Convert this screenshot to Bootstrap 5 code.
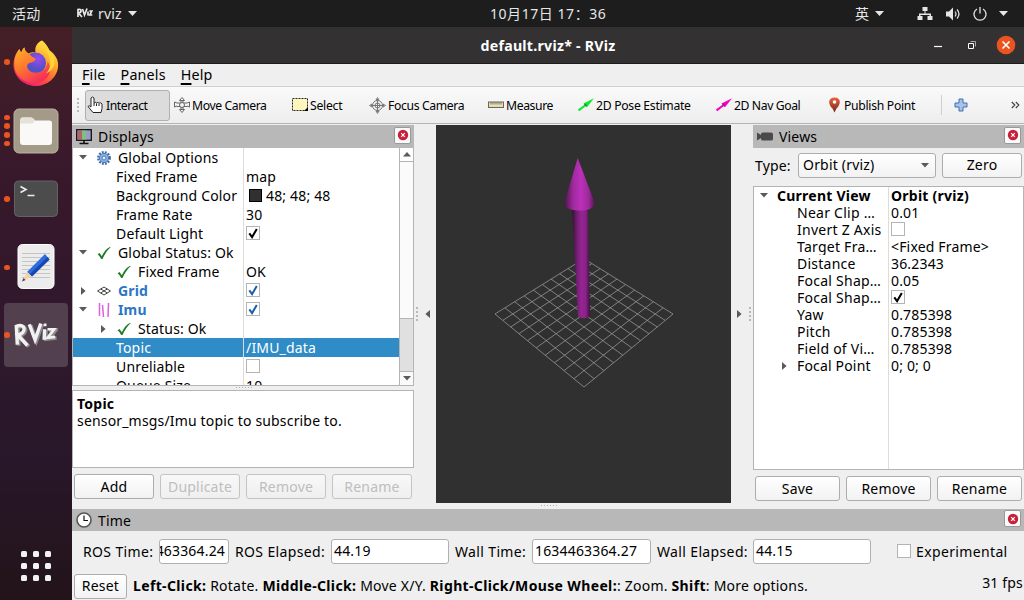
<!DOCTYPE html>
<html lang="zh-CN">
<head>
<meta charset="utf-8">
<meta name="viewport" content="width=device-width, initial-scale=1">
<title>default.rviz* - RViz</title>
<link href="https://cdn.jsdelivr.net/npm/bootstrap@5.3.0/dist/css/bootstrap.min.css" rel="stylesheet">
<style>
body{width:1024px;height:600px;overflow:hidden;background:#efefef;color:#000;font:14px/19px "Noto Sans","Noto Sans CJK SC",sans-serif;letter-spacing:.17px;white-space:nowrap}
b{letter-spacing:.24px}
svg{display:block;flex:none}
.topbar{height:27px;background:#1d1d1d;color:#e6e6e6;display:grid;grid-template-columns:12px 64px 404px 1fr;align-items:center}
.clock{padding-left:10px;letter-spacing:.55px}
.tray{width:169px;display:grid;grid-template-columns:19px 43px 28px 28px 23px 1fr;align-items:center}
.dock{width:72px;height:573px;background:linear-gradient(#451f26,#38182b 25%,#2f182c 55%,#28172a 75%,#221419);}
.dock-item{height:68.400px;width:72px;padding-top:2px}
.dots{width:13px;padding-left:4px;gap:3.7px}
.dots i{width:5.6px;height:5.6px;border-radius:50%;background:#e95420}
.tile{width:64px;height:64px;background:#53404f;border-radius:4px;margin-left:4px}
.titlebar{height:37px;background:#333132;border-bottom:1px solid #1c1b1b;color:#fff;font-weight:700;font-size:14.2px;letter-spacing:.25px}
.win-buttons{width:92px;margin-left:-92px}
.menus{height:22px;gap:15px;padding:0 10px 1px;font-size:14.3px;letter-spacing:.17px}
.menus u{text-underline-offset:3px;text-decoration-thickness:1.5px}
.tools{height:38px;border-top:1px solid #cfcfcf;border-bottom:1px solid #b4b4b4;background:linear-gradient(#fafafa,#ededed);display:grid;grid-template-columns:13px 85px 118px 77px 119px 90px 138px 111px 115px 30px 1fr;align-items:center;font-size:12.2px;letter-spacing:-.4px}
.tool{gap:2px;padding-left:4px}
.tool.active{height:31px;border:1px solid #b0b0b0;border-radius:3px;background:#dcdcdc;padding-left:1px}
.grip-v{width:4px;height:16px;background-image:radial-gradient(circle,#b9b9b9 .8px,transparent 1px);background-size:4px 4px}
.grip-h{width:17px;height:3px;background-image:radial-gradient(circle,#b0b0b0 .7px,transparent 1px);background-size:3px 3px}
.main-area{height:379px;margin-top:1px;display:grid;grid-template-columns:342px 22px 295px 22px 271px}
.head{height:23px;background:#b8b8b8;padding-left:4px;gap:6px}
.x-btn{width:17px;height:17px;border:1px solid #999;border-radius:2px;background:#fafafa;margin:0 3px 3px auto}
.tree{background:#fff;border:1px solid #b4b4b4}
.disp{height:238px;border-top:0;overflow:hidden}
.disp .entry{height:19px;width:326px;display:grid;grid-template-columns:171px 1fr;align-items:stretch}
.entry>div{display:flex;align-items:center}
.entry>div:first-child{border-right:1px solid #dcdcdc;overflow:hidden}
.disp .entry>div:last-child{padding-left:2px}
.chev{width:20px;flex:none;display:flex;justify-content:center}
.ico{width:25px;flex:none;display:flex;justify-content:center;padding-right:4px}
.l2{padding-left:43px!important}
.blue{color:#2a76c6;font-weight:700}
.sel{background:#308cc6;color:#fff}
.box{width:14px;height:14px;border:1px solid #b4b4b4;background:#fff}
.entry .box{margin-bottom:1px}
.scrollb{width:14px;border-left:1px solid #b4b4b4;background:#e0e0e0}
.sb-up{height:14px;border-bottom:1px solid #b4b4b4;background:#fff}
.sb-thumb{height:157px;background:#fbfbfb;border-bottom:1px solid #b4b4b4}
.sb-down{height:14px;border-top:1px solid #b4b4b4;background:#fafafa;margin-top:auto}
.help{height:78px;background:#fff;border:1px solid #b4b4b4;padding:4px 4px;line-height:17px}
.b{height:25px;padding:0;border:1px solid #adadad;border-radius:3px;background:linear-gradient(#fff,#f2f2f2);color:#000;font-size:14px;line-height:22px;letter-spacing:.2px}
.b.disabled,.b:disabled{color:#bebebe;border-color:#c4c4c4;background:linear-gradient(#f8f8f8,#efefef);opacity:1}
.b4{gap:6px;padding:6px 2px 0}.b4 .b{width:80px}
.b3{gap:6px;padding:6px 2px 0}.b3 .b{width:85px}
.type-row{height:38px;padding:0 2px 4px}
.views .entry{height:17px;line-height:17px;display:grid;grid-template-columns:135px 1fr}
.views .entry>div:first-child{border:0}
.views .entry>div:last-child{padding-left:2px}
.view-tree{height:284px;background:linear-gradient(#dcdcdc,#dcdcdc) 134px 0/1px 100% no-repeat #fff}
.l1v{padding-left:43px;letter-spacing:.25px}
.field{height:25px;border:1px solid #b0b0b0;border-radius:3px;background:#fff;padding:0 3px 1px 2px;line-height:22px;overflow:hidden}
.times{height:40px;display:grid;grid-template-columns:76px 70px 6px 96px 118px 6px 77px 119px 6px 96px 118px 26px 1fr;align-items:center;padding-left:11px}
.times>span,.times .cap{letter-spacing:.36px}
.hint{letter-spacing:.22px}
.hint b{letter-spacing:.36px}
.apps{padding:184px 0 0 21px}
</style>
</head>
<body>
<svg width="0" height="0" class="position-absolute">
<defs>
<symbol id="dn" viewBox="0 0 8 5"><path d="M0 0h8L4 4.6z" fill="#5a5a5a"/></symbol>
<symbol id="rt" viewBox="0 0 5 8"><path d="M0 0v8L4.6 4z" fill="#5a5a5a"/></symbol>
<symbol id="ok" viewBox="0 0 14 14"><path d="M.6 8.2L2.6 7l2.2 3.2C7.200 5.500 9.500 2.500 13.300.8L13.600 1.200C10 4.500 7.500 8.500 5.500 13H4.200C3.200 11 2 9.400.6 8.200z" fill="#1e7b24"/></symbol>
<symbol id="tick" viewBox="0 0 12 12"><path d="M2.300 6.300l2.800 3.800L9.800 2" fill="none" stroke="currentColor" stroke-width="2"/></symbol>
<symbol id="x" viewBox="0 0 12 12"><circle cx="6" cy="6" r="5.200" fill="#c8203a"/><path d="M4.200 4.200l3.600 3.600M7.800 4.200l-3.600 3.600" stroke="#fff" stroke-width="1.200"/></symbol>
<symbol id="pose" viewBox="0 0 16 14"><path d="M.5 12.500L7 7.500" stroke="currentColor" stroke-width="2.200"/><path d="M5.500 5.500L16 .2 9 9.200z" fill="currentColor"/><path d="M6.500 6l2 2.300" stroke="#333" stroke-opacity=".6" stroke-width="1.500"/></symbol>
<linearGradient id="gm" x2="1"><stop stop-color="#4c164a"/><stop offset=".3" stop-color="#a02a9f"/><stop offset=".55" stop-color="#bb30b9"/><stop offset=".8" stop-color="#9d299b"/><stop offset="1" stop-color="#561654"/></linearGradient>
<linearGradient id="gs" x2="1"><stop stop-color="#2b112c"/><stop offset=".22" stop-color="#6a1b69"/><stop offset=".5" stop-color="#942592"/><stop offset=".75" stop-color="#8b2289"/><stop offset="1" stop-color="#3a1239"/></linearGradient>
<linearGradient id="ff" x1=".8" y1="0" x2=".2" y2="1"><stop stop-color="#fff44f"/><stop offset=".35" stop-color="#ffab2a"/><stop offset=".65" stop-color="#ff5a35"/><stop offset="1" stop-color="#e5127b"/></linearGradient>
<linearGradient id="ffo" x1="0" y1="0" x2=".6" y2="1"><stop stop-color="#ffb32c"/><stop offset=".5" stop-color="#ff7a2c"/><stop offset="1" stop-color="#f5305a"/></linearGradient>
<radialGradient id="fp" cx=".6" cy=".3"><stop stop-color="#9a4bf0"/><stop offset="1" stop-color="#5650c8"/></radialGradient>
<linearGradient id="pin" x2="0" y2="1"><stop stop-color="#f0603c"/><stop offset="1" stop-color="#6f2a18"/></linearGradient>
</defs>
</svg>

<header class="topbar">
  <span></span><span>活动</span>
  <div class="d-flex align-items-center">
    <svg width="17" height="14" viewBox="0 0 17 14" fill="none" stroke="#e8e8e8" stroke-width="1.700"><path d="M2 10V2.500c4-1 4 3 .5 3.500L6 10M6.500 2l2 6L11 1.500M12 4.500v4M13.300 4h2.500l-2 4h2.500"/></svg>
    <span style="margin-left:5px">rviz</span>
    <svg style="margin-left:5px" width="11" height="7"><path d="M1 1h9L5.500 6z" fill="#e6e6e6"/></svg>
  </div>
  <div class="d-flex align-items-center justify-content-between">
    <span class="clock">10月17日 17：36</span>
    <div class="tray">
      <span>英</span>
      <svg width="11" height="7"><path d="M1 1h9L5.500 6z" fill="#e6e6e6"/></svg>
      <svg width="16" height="14" viewBox="0 0 16 14" fill="#e6e6e6"><path d="M5.500 0h5v4h-2v2.500H14V9h1.500v4h-5V9h2V8h-9v1h2v4H.5V9H2V6.500h5.500V4h-2z"/></svg>
      <svg width="16" height="14" viewBox="0 0 16 14"><path d="M1 4.500h3L8 .5v13L4 9.500H1z" fill="#e6e6e6"/><path d="M10 4.500q2 2.500 0 5M12 2.500q4 4.500 0 9" fill="none" stroke="#e6e6e6" stroke-width="1.200"/></svg>
      <svg width="14" height="14" viewBox="0 0 14 14" fill="none" stroke="#e6e6e6" stroke-width="1.300"><path d="M4 2a6 6 0 1 0 6 0M7 0v6.500"/></svg>
      <svg style="margin-left:2px" width="11" height="7"><path d="M1 1h9L5.500 6z" fill="#e6e6e6"/></svg>
    </div>
  </div>
</header>

<div class="d-flex">
<nav class="dock">
  <div class="dock-item d-flex align-items-center"><div class="dots d-flex flex-column"><i></i></div>
    <svg width="46" height="47" viewBox="0 0 46 47"><path d="M29 1.500C33 5 35 8 36 11c6 4 10 10 9 17-1 11-11 19-22.500 19S1 38 .5 27C.3 19 3 14 6.500 10c.5 2 1 2.500 2 3.500C9 11 10 9.500 11.500 8.500c0 3 2 5 4 6 2.500-1.500 5-1.500 7-1C21.500 8 24 3.500 29 1.500z" fill="url(#ff)"/><circle cx="22.500" cy="24" r="10.500" fill="url(#fp)"/><path d="M6.500 10c.5 2 1 2.500 2 3.500C9 11 10 9.500 11.500 8.500c0 3 2 5 4 6 1 1 4 4 7 5 0 3-4 4-7 5-3 2-1 8 5 9 7 1 14-3 14-11 5 6 3 18-8 21C12 46 2 37 1.500 27 1.300 19 3 14 6.500 10z" fill="url(#ffo)"/><path d="M29 1.500c0 5 3 8 5 12 5 8 4 16-1 21 10-4 11-15 4-22C35 8 33 5 29 1.500z" fill="#ffd437"/></svg></div>
  <div class="dock-item d-flex align-items-center"><div class="dots d-flex flex-column" style="gap:3px"><i></i><i></i><i></i><i></i></div>
    <svg width="46" height="46" viewBox="0 0 46 46"><rect x="1" y="1" width="44" height="44" rx="5" fill="#a39b88" stroke="#b8b29f"/><path d="M7 13.500q0-4 3-4h8q2 0 4 3h14.500q2.500 0 2.500 2.500v19q0 3-3 3H10q-3 0-3-3z" fill="#faf9f7"/><path d="M7 13.500q0-4 3-4h8q2 0 4 3l-2.500 3H7z" fill="#e5e2da"/></svg></div>
  <div class="dock-item d-flex align-items-center"><div class="dots d-flex flex-column"><i></i></div>
    <svg width="46" height="38" viewBox="0 0 46 38"><rect x="1.500" y="1" width="43" height="35.500" rx="4" fill="#4c4c4c" stroke="#636363"/><path d="M7.500 6.500l5.500 3-5.500 3M14.500 15.500h7" fill="none" stroke="#eee" stroke-width="1.600"/></svg></div>
  <div class="dock-item d-flex align-items-center"><div class="dots d-flex flex-column"><i></i></div>
    <svg width="46" height="48" viewBox="0 0 46 48"><rect x="5" y="1.500" width="36" height="44" rx="4.500" fill="#ececec" stroke="#fff"/><path d="M9 10.500h28M9 14.500h28M9 18.500h28M9 22.500h28M9 26.500h28M9 30.500h28M9 34.500h28" stroke="#c4c4c4"/><path d="M14 29l18-18 4.500 5.500L19 33.500z" fill="#2d6be0"/><path d="M16.500 31.500l18-17.500 2 2.500L19 33.500z" fill="#1746ad"/><path d="M14 29l5 4.500L9 38.500z" fill="#f5d3a9"/><path d="M10.500 35l2 2L9 38.500z" fill="#444"/></svg></div>
  <div class="tile d-flex align-items-center" style="margin-top:2.400px"><div class="dots d-flex flex-column" style="padding-left:0;width:9px"><i></i></div>
    <svg width="45" height="30" viewBox="0 0 47 30" fill="none"><g stroke="#8b8b8b" stroke-width="4" transform="translate(1.500 1)"><path d="M4.500 25L3.500 6c10-4 11 7 1.500 9l10 11M17 4l6 16 6-17M33 9l-.5 11M36 9h7l-7 9 8-1"/></g><g stroke="#f1f1f1" stroke-width="3.600"><path d="M4.500 25L3.500 6c10-4 11 7 1.500 9l10 11M17 4l6 16 6-17M33 9l-.5 11"/><path d="M36 9h7l-7 9 8-1M32 4.500h3" stroke-width="2.800"/></g></svg></div>
  <div class="apps">
    <svg width="30" height="30" viewBox="0 0 30 30" fill="#f2f2f2"><g id="ar"><rect width="6" height="6" rx="1.500"/><rect x="12" width="6" height="6" rx="1.500"/><rect x="24" width="6" height="6" rx="1.500"/></g><use href="#ar" y="12"/><use href="#ar" y="24"/></svg></div>
</nav>

<div style="width:952px">
  <div class="titlebar d-flex align-items-center">
      <span class="flex-fill text-center">default.rviz* - RViz</span>
      <svg class="win-buttons" width="92" height="22" viewBox="0 0 92 22" fill="none" stroke="#fff"><path d="M2 12.500h8" stroke-width="1.200"/><path d="M36.500 9.500h5v5h-5z"/><path d="M38.500 7.500h5v5" stroke="#aaa"/><circle cx="74" cy="11" r="9.300" fill="#e95420" stroke="none"/><path d="M70.500 7.500l7 7M77.500 7.500l-7 7" stroke-width="1.600"/></svg>
  </div>
  <div class="menus d-flex align-items-center"><span><u>F</u>ile</span><span><u>P</u>anels</span><span><u>H</u>elp</span></div>
  <div class="tools">
    <div class="grip-v ms-1"></div>
    <div class="tool active d-flex align-items-center"><svg width="17" height="18" viewBox="0 0 17 18"><path d="M4 10V2q1.500-2 3 0v5q1.500-1.500 2.500 0 1.500-1.200 2.500.2 2-1.200 3 .8v4.500L14 16.500H6L1 10.500q1-2 3 .5z" fill="#fff" stroke="#222"/><path d="M7 7v3M9.500 7.500V10M12 8v2" stroke="#222" fill="none"/></svg>Interact</div>
    <div class="tool d-flex align-items-center"><svg width="16" height="16" viewBox="0 0 16 16" fill="none" stroke="#666"><circle cx="8" cy="8" r="2.500"/><path d="M8 .5l2.500 3h-5zM8 15.500l2.500-3h-5zM.5 5v5l2.500-1M15.500 5v5L13 9M3 6h3M10 6h3M3 9.500h3M10 9.500h3M7 4v2M9 4v2M7 10v2.500M9 10v2.500M.5 5L3 6M15.500 5L13 6"/></svg>Move Camera</div>
    <div class="tool d-flex align-items-center" style="letter-spacing:-.25px"><svg width="16" height="14" viewBox="0 0 16 14"><rect x=".5" y=".5" width="15" height="12" fill="#fff6bd" stroke="#222" stroke-dasharray="2 1"/><path d="M12 13h4V9z"/></svg>Select</div>
    <div class="tool d-flex align-items-center" style="letter-spacing:-.36px"><svg width="17" height="17" viewBox="0 0 17 17" fill="none" stroke="#777"><circle cx="8.500" cy="8.500" r="5"/><circle cx="8.500" cy="8.500" r="2.500"/><path d="M8.500 2v13M2 8.500h13M8.500.5L7 3h3zM8.500 16.500L7 14h3zM.5 8.500L3 7v3zM16.500 8.500L14 7v3z"/></svg>Focus Camera</div>
    <div class="tool d-flex align-items-center"><svg width="16" height="8" viewBox="0 0 16 8"><rect x=".5" y="1" width="15" height="5.500" fill="#e8dfae" stroke="#666"/><path d="M3 1v2.500M5 1v2.500M7 1v2.500M9 1v2.500M11 1v2.500M13 1v2.500" stroke="#666" stroke-width=".8"/></svg>Measure</div>
    <div class="tool d-flex align-items-center" style="letter-spacing:-.29px"><svg width="16" height="14" color="#0bea2c"><use href="#pose"/></svg>2D Pose Estimate</div>
    <div class="tool d-flex align-items-center"><svg width="16" height="14" color="#f500c8"><use href="#pose"/></svg>2D Nav Goal</div>
    <div class="tool d-flex align-items-center" style="gap:2px;letter-spacing:-.3px"><svg width="15" height="16" viewBox="0 0 15 16"><path d="M7.500.5c7 0 6.500 7 2 11l-2 4-2-4C1 7.500.5.500 7.500.5z" fill="url(#pin)"/><circle cx="7.500" cy="5" r="1.800" fill="#fff"/></svg>Publish Point</div>
    <div class="d-flex align-items-center"><svg width="32" height="20" viewBox="0 0 32 20"><path d="M3.500 0v20" stroke="#cfcfcf"/><path d="M20.500 4.500h4v4h4v4h-4v4h-4v-4h-4v-4h4z" transform="translate(.5 -.5)" fill="#a9c3e6" stroke="#3f6fb0"/></svg></div>
    <span class="ms-auto" style="padding-right:4px"><svg width="9" height="8" viewBox="0 0 9 8" fill="none" stroke="#444" stroke-width="1.200"><path d="M.8 1l3 3-3 3M4.800 1l3 3-3 3"/></svg></span>
  </div>

  <div class="main-area">
    <section>
      <div class="head d-flex align-items-center"><svg width="16" height="17" viewBox="0 0 16 17"><rect x=".7" y="1.700" width="14.600" height="10.600" fill="#9a9ad0" stroke="#111" stroke-width="1.300"/><path d="M1.500 2.500H6v9H1.500z" fill="#b06464"/><path d="M6 2.500h4.500v9H6z" fill="#7fc07f"/><path d="M8 12v3M3.500 15.500h9" stroke="#111" stroke-width="1.600"/></svg><span>Displays</span><div class="x-btn d-flex align-items-center justify-content-center"><svg width="12" height="12"><use href="#x"/></svg></div></div>
      <div class="tree disp d-flex">
        <div style="width:326px">
          <div class="entry"><div><span class="chev"><svg width="8" height="5"><use href="#dn"/></svg></span><span class="ico"><svg width="14" height="14" viewBox="0 0 14 14"><circle cx="7" cy="7" r="5.700" fill="none" stroke="#3d69a8" stroke-width="2.400" stroke-dasharray="1.800 1.200"/><circle cx="7" cy="7" r="4.600" fill="#8fb3e0" stroke="#4a78b8"/><circle cx="7" cy="7" r="2" fill="#e6eefa" stroke="#4a78b8"/></svg></span><span>Global Options</span></div><div></div></div>
          <div class="entry"><div class="l2">Fixed Frame</div><div>map</div></div>
          <div class="entry"><div class="l2">Background Color</div><div><svg width="20" height="13"><rect x="3.500" y=".5" width="12" height="12" fill="#303030" stroke="#000"/></svg>48; 48; 48</div></div>
          <div class="entry"><div class="l2">Frame Rate</div><div>30</div></div>
          <div class="entry"><div class="l2">Default Light</div><div><span class="box"><svg width="12" height="12"><use href="#tick"/></svg></span></div></div>
          <div class="entry"><div><span class="chev"><svg width="8" height="5"><use href="#dn"/></svg></span><span class="ico"><svg width="14" height="14"><use href="#ok"/></svg></span><span>Global Status: Ok</span></div><div></div></div>
          <div class="entry"><div><span class="chev"></span><span class="chev"></span><span class="ico"><svg width="14" height="14"><use href="#ok"/></svg></span><span>Fixed Frame</span></div><div>OK</div></div>
          <div class="entry"><div><span class="chev"><svg width="5" height="8"><use href="#rt"/></svg></span><span class="ico"><svg width="14" height="10" viewBox="0 0 14 10" fill="none" stroke="#444"><path d="M.5 5L7 1l6.500 4L7 9zM3.700 3l6.600 4M10.300 3L3.700 7"/></svg></span><span class="blue">Grid</span></div><div><span class="box" style="color:#1d5fa8"><svg width="12" height="12"><use href="#tick"/></svg></span></div></div>
          <div class="entry"><div><span class="chev"><svg width="8" height="5"><use href="#dn"/></svg></span><span class="ico"><svg width="14" height="14" viewBox="0 0 14 14" stroke="#dc62dc" stroke-width="1.500"><path d="M2.500 0v13M5.500 2l1 12M11 14l.5-14"/></svg></span><span class="blue">Imu</span></div><div><span class="box" style="color:#1d5fa8"><svg width="12" height="12"><use href="#tick"/></svg></span></div></div>
          <div class="entry"><div><span class="chev"></span><span class="chev"><svg width="5" height="8"><use href="#rt"/></svg></span><span class="ico"><svg width="14" height="14"><use href="#ok"/></svg></span><span>Status: Ok</span></div><div></div></div>
          <div class="entry sel"><div class="l2">Topic</div><div>/IMU_data</div></div>
          <div class="entry"><div class="l2">Unreliable</div><div><span class="box"></span></div></div>
          <div class="entry"><div class="l2">Queue Size</div><div>10</div></div>
        </div>
        <div class="scrollb d-flex flex-column"><div class="sb-up d-flex align-items-center justify-content-center"><svg width="8" height="5" viewBox="0 0 8 5"><path d="M0 4.500h8L4 0z" fill="#5a5a5a"/></svg></div><div class="sb-thumb"></div><div class="sb-down d-flex align-items-center justify-content-center"><svg width="8" height="5"><use href="#dn"/></svg></div></div>
      </div>
      <div class="d-flex justify-content-center" style="height:4px"><div class="grip-h"></div></div>
      <div class="help"><b>Topic</b><br>sensor_msgs/Imu topic to subscribe to.</div>
      <div class="b4 d-flex"><button class="btn b">Add</button><button class="btn b" disabled>Duplicate</button><button class="btn b" disabled>Remove</button><button class="btn b" disabled>Rename</button></div>
    </section>
    <div class="d-flex align-items-center" style="gap:9px;padding:0 0 2px 1px"><div class="grip-v"></div><svg style="margin-left:-3px" width="5" height="8"><path d="M5 0v8L.4 4z" fill="#5a5a5a"/></svg></div>
    <svg id="scene" width="295" height="378" viewBox="0 0 295 378"><rect width="295" height="378" fill="#303030"/><path id="grid" fill="none" stroke="#8f8f8f" stroke-width=".85"/>
      <path d="M136 82h15.800l2.400 109.500q-6 3.500-12.200 0z" fill="url(#gs)"/>
      <path d="M141.700 33l17 45q-1 7.500-15 7.500T128.300 78z" fill="url(#gm)"/></svg>
    <div class="d-flex align-items-center" style="padding:0 0 2px 6px;gap:6px"><svg width="5" height="8"><use href="#rt"/></svg><div class="grip-v"></div></div>
    <section class="views">
      <div class="head d-flex align-items-center"><svg width="16" height="9" viewBox="0 0 16 9" fill="#4a4a4a"><path d="M0 .5l4 2.500V2q0-1.500 2-1.500h8q2 0 2 1.500v5q0 1.500-2 1.500H6Q4 8.500 4 7V6L0 8.500z"/></svg><span>Views</span><div class="x-btn d-flex align-items-center justify-content-center"><svg width="12" height="12"><use href="#x"/></svg></div></div>
      <div class="type-row d-flex align-items-center"><span style="width:43px">Type:</span><div class="btn b d-flex align-items-center justify-content-between" style="width:138px;padding:0 6px 0 4px"><span>Orbit (rviz)</span><svg width="8" height="5"><use href="#dn"/></svg></div><button class="btn b" style="width:80px;margin-left:6px">Zero</button></div>
      <div class="tree view-tree">
        <div class="entry fw-bold"><div><span class="chev"><svg width="8" height="5"><use href="#dn"/></svg></span><span style="padding-left:3px;letter-spacing:.25px">Current View</span></div><div style="letter-spacing:.25px">Orbit (rviz)</div></div>
        <div class="entry"><div class="l1v">Near Clip …</div><div>0.01</div></div>
        <div class="entry"><div class="l1v">Invert Z Axis</div><div><span class="box"></span></div></div>
        <div class="entry"><div class="l1v">Target Fra…</div><div>&lt;Fixed Frame&gt;</div></div>
        <div class="entry"><div class="l1v">Distance</div><div>36.2343</div></div>
        <div class="entry"><div class="l1v">Focal Shap…</div><div>0.05</div></div>
        <div class="entry"><div class="l1v">Focal Shap…</div><div><span class="box"><svg width="12" height="12"><use href="#tick"/></svg></span></div></div>
        <div class="entry"><div class="l1v">Yaw</div><div>0.785398</div></div>
        <div class="entry"><div class="l1v">Pitch</div><div>0.785398</div></div>
        <div class="entry"><div class="l1v">Field of Vi…</div><div>0.785398</div></div>
        <div class="entry"><div><span class="chev"></span><span class="chev"><svg width="5" height="8"><use href="#rt"/></svg></span><span style="padding-left:3px">Focal Point</span></div><div>0; 0; 0</div></div>
      </div>
      <div class="b3 d-flex"><button class="btn b">Save</button><button class="btn b">Remove</button><button class="btn b">Rename</button></div>
    </section>
  </div>
  <div class="d-flex justify-content-center" style="height:5px"><div class="grip-h"></div></div>
  <div class="head d-flex align-items-center" style="height:22px"><svg width="16" height="16" viewBox="0 0 16 16"><circle cx="8" cy="8" r="7" fill="#fff" stroke="#555" stroke-width="1.600"/><path d="M8 3.500V8.500h4" fill="none" stroke="#111" stroke-width="1.200"/></svg><span>Time</span><div class="x-btn d-flex align-items-center justify-content-center"><svg width="12" height="12"><use href="#x"/></svg></div></div>
  <div class="times">
    <span>ROS Time:</span><div class="field d-flex justify-content-end"><span>463364.24</span></div><i></i>
    <span>ROS Elapsed:</span><div class="field">44.19</div><i></i>
    <span>Wall Time:</span><div class="field">1634463364.27</div><i></i>
    <span>Wall Elapsed:</span><div class="field">44.15</div><i></i>
    <div class="cap d-flex align-items-center" style="gap:5px"><span class="box"></span>Experimental</div>
  </div>
  <div class="d-flex align-items-center" style="height:28px;padding:0 1px 0 2px"><button class="btn b" style="width:53px;margin-top:2px">Reset</button><span class="hint" style="margin-left:6px"><b>Left-Click:</b> Rotate. <b>Middle-Click:</b> Move X/Y. <b>Right-Click/Mouse Wheel:</b>: Zoom. <b>Shift</b>: More options.</span><span class="ms-auto" style="padding-bottom:6px">31 fps</span></div>
</div>
</div>
<script src="https://cdn.jsdelivr.net/npm/bootstrap@5.3.0/dist/js/bootstrap.bundle.min.js"></script>
<script>
// Orbit camera looking at the origin, yaw and pitch of 45 degrees, vertical field of view of 45 degrees.
const dist = 36.2343, f = 189 / Math.tan(Math.PI / 8), c = Math.SQRT1_2;
function project(x, y) {
  const u = (x - y) * c, v = (x + y) * c, k = f / (dist - v * c);
  return (148 + u * k).toFixed(2) + ' ' + (189 + v * c * k).toFixed(2);
}
let d = '';
for (let i = -5; i <= 5; i++) d += 'M' + project(i, -5) + 'L' + project(i, 5) + 'M' + project(-5, i) + 'L' + project(5, i);
document.getElementById('grid').setAttribute('d', d);
</script>
</body>
</html>
